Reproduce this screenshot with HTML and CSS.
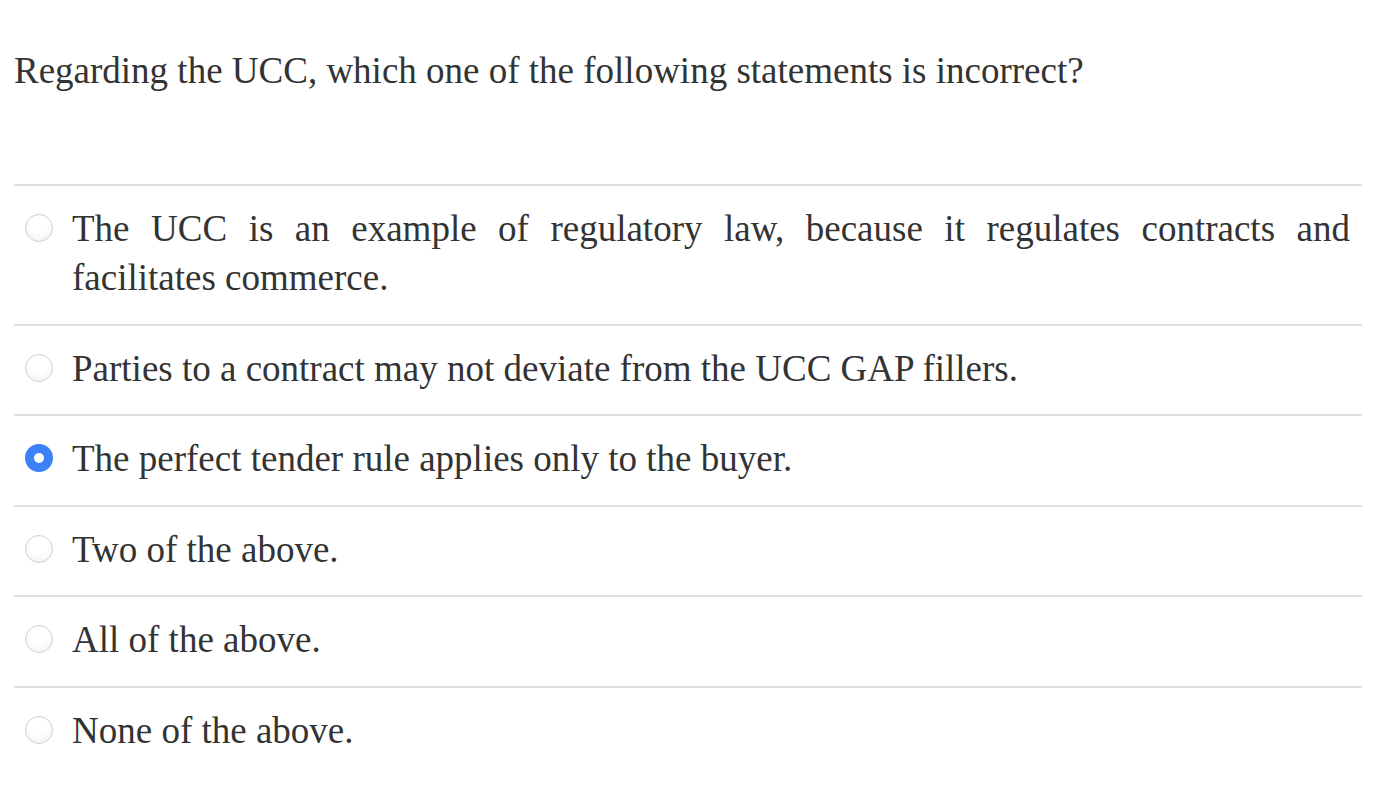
FILE: index.html
```html
<!DOCTYPE html>
<html>
<head>
<meta charset="utf-8">
<link rel="stylesheet" href="styles.css">
</head>
<body>
<div class="quiz">
  <p class="question">Regarding the UCC, which one of the following statements is incorrect?</p>
  <ul class="options">
    <li class="option"><span class="radio"></span><span class="label">The UCC is an example of regulatory law, because it regulates contracts and facilitates commerce.</span></li>
    <li class="option"><span class="radio"></span><span class="label">Parties to a contract may not deviate from the UCC GAP fillers.</span></li>
    <li class="option"><span class="radio checked"></span><span class="label">The perfect tender rule applies only to the buyer.</span></li>
    <li class="option"><span class="radio"></span><span class="label">Two of the above.</span></li>
    <li class="option"><span class="radio"></span><span class="label">All of the above.</span></li>
    <li class="option"><span class="radio"></span><span class="label">None of the above.</span></li>
  </ul>
</div>
</body>
</html>
```
FILE: styles.css
```css
html, body {
  margin: 0;
  padding: 0;
  background: #fff;
}
body {
  font-family: "Liberation Serif", "Times New Roman", serif;
  color: #333;
}
.quiz {
  width: 1348px;
  margin-left: 14px;
}
.question {
  margin: 0;
  padding-top: 46px;
  font-size: 37px;
  line-height: 49px;
}
.options {
  list-style: none;
  margin: 89px 0 0 0;
  padding: 0;
}
.option {
  display: flex;
  align-items: flex-start;
  border-top: 2px solid #e0e0e0;
  padding: 18px 12px 21.5px 11px;
  font-size: 37px;
  line-height: 49px;
}
.radio {
  flex: 0 0 auto;
  box-sizing: border-box;
  width: 28px;
  height: 28px;
  margin-top: 10px;
  margin-right: 19px;
  border-radius: 50%;
  border: 1.5px solid #d0d0d0;
  background: radial-gradient(circle at 50% 35%, #ffffff 40%, #eeeeee 100%);
}
.radio.checked {
  border: 9px solid #3b82f6;
  background: #fff;
}
.label {
  flex: 1 1 auto;
  text-align: justify;
}
```
